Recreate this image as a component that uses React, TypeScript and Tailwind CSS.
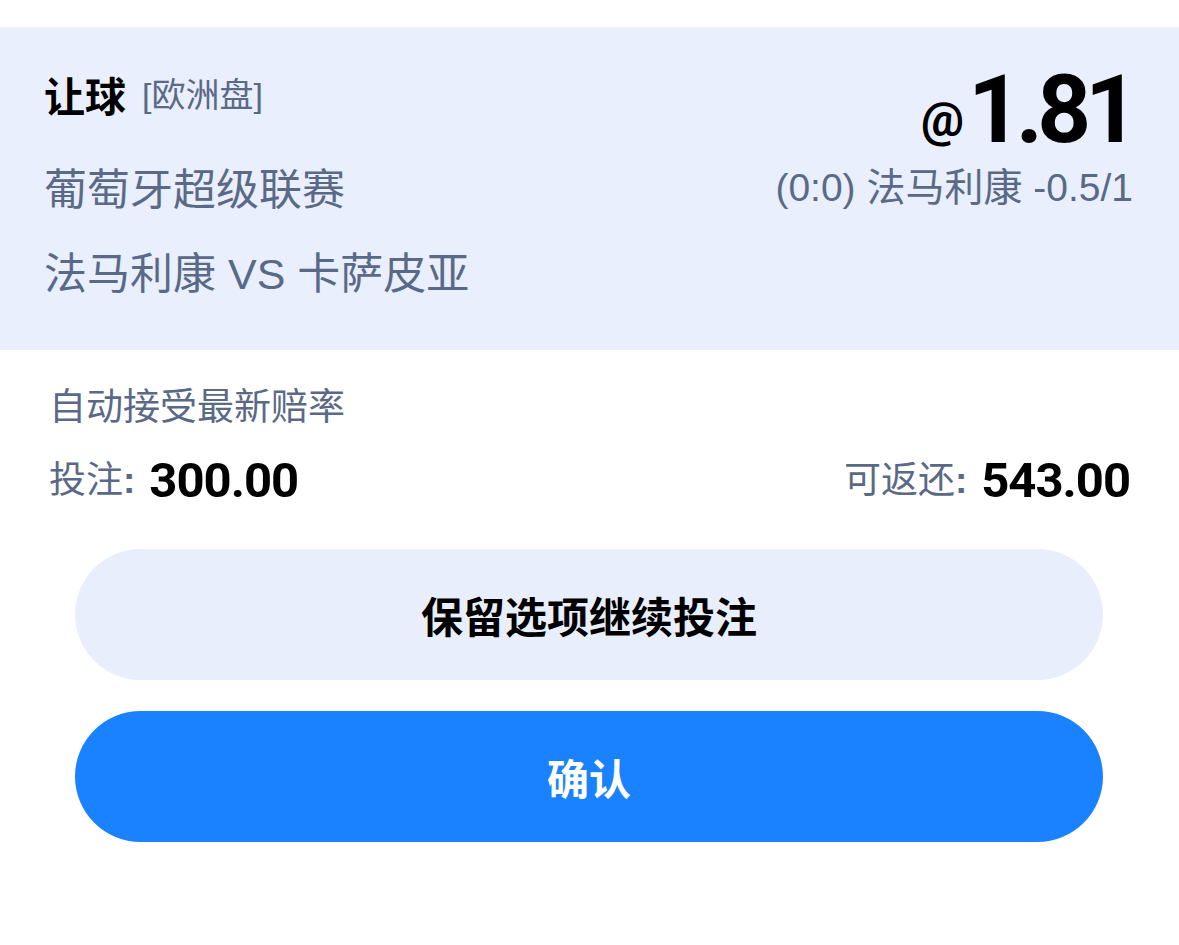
const gray = "font-['Liberation_Sans','Noto_Sans_CJK_SC',sans-serif] text-[#5a6a86]";

export default function App() {
  return (
    <div className="w-[1179px] h-[945px] bg-white pt-[27px] font-['Noto_Sans_CJK_SC',sans-serif]">
      {/* Bet summary */}
      <div className="h-[323px] bg-[#e9effd] px-[44px] flex justify-between">
        <div className="pt-[43px]">
          <div className="h-[50px] flex items-center gap-[16px]">
            <span className="text-[41px] font-bold text-black">让球</span>
            <span className={`text-[34px] ${gray}`}>[欧洲盘]</span>
          </div>
          <div className={`mt-[45px] h-[50px] flex items-center text-[43px] ${gray}`}>
            葡萄牙超级联赛
          </div>
          <div className={`mt-[34px] h-[50px] flex items-center text-[43px] ${gray}`}>
            法马利康 VS 卡萨皮亚
          </div>
        </div>
        <div className="pt-[36px] flex flex-col items-end pr-[2px]">
          <div className="flex items-baseline text-black font-bold font-['Roboto',sans-serif]">
            <span className="text-[48px] leading-none mr-[4px] -translate-y-[6px]">@</span>
            <span className="text-[94px] leading-none tracking-[-6px]">1.81</span>
          </div>
          <div className={`mt-[9px] h-[44px] flex items-center text-[39px] ${gray}`}>
            (0:0) 法马利康 -0.5/1
          </div>
        </div>
      </div>

      {/* Stake */}
      <div className="pl-[49px] pr-[49px] pt-[36px]">
        <div className={`h-[44px] flex items-center text-[37px] ${gray}`}>
          自动接受最新赔率
        </div>
        <div className="mt-[21px] h-[60px] flex items-center justify-between">
          <div className="flex items-center">
            <span className={`text-[37px] ${gray}`}>投注</span>
            <span className={`text-[37px] font-bold mr-[14px] ${gray}`}>:</span>
            <span className="text-[49px] font-bold text-black font-['Roboto',sans-serif] tracking-[-1px]">300.00</span>
          </div>
          <div className="flex items-center">
            <span className={`text-[37px] ${gray}`}>可返还</span>
            <span className={`text-[37px] font-bold mr-[14px] ${gray}`}>:</span>
            <span className="text-[49px] font-bold text-black font-['Roboto',sans-serif] tracking-[-1px]">543.00</span>
          </div>
        </div>
      </div>

      {/* Actions */}
      <div className="pl-[75px] pr-[76px] mt-[38px] flex flex-col gap-[31px]">
        <button className="h-[131px] rounded-full bg-[#e8eefb] text-[42px] font-bold text-black">
          保留选项继续投注
        </button>
        <button className="h-[131px] rounded-full bg-[#1a82ff] text-[42px] font-bold text-white">
          确认
        </button>
      </div>
    </div>
  );
}
